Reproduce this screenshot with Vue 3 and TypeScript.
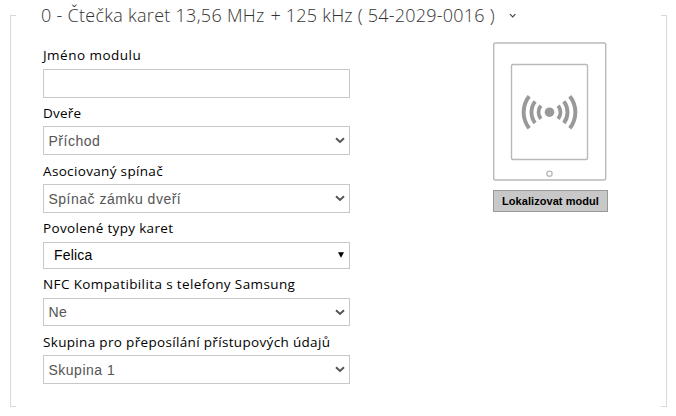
<script setup lang="ts">
import { reactive } from 'vue'

interface Field {
  id: string
  label: string
  kind: 'text' | 'select' | 'multi'
  value: string
  height: number
  spacing: number
}

const fields = reactive<Field[]>([
  { id: 'name', label: 'Jméno modulu', kind: 'text', value: '', height: 29, spacing: 0.48 },
  { id: 'door', label: 'Dveře', kind: 'select', value: 'Příchod', height: 29, spacing: 0.2 },
  { id: 'switch', label: 'Asociovaný spínač', kind: 'select', value: 'Spínač zámku dveří', height: 29, spacing: 0.34 },
  { id: 'cards', label: 'Povolené typy karet', kind: 'multi', value: 'Felica', height: 27, spacing: 0.33 },
  { id: 'nfc', label: 'NFC Kompatibilita s telefony Samsung', kind: 'select', value: 'Ne', height: 28, spacing: 0.38 },
  { id: 'group', label: 'Skupina pro přeposílání přístupových údajů', kind: 'select', value: 'Skupina 1', height: 29, spacing: 0.33 },
])
</script>

<template>
  <main class="page">
    <section class="module">
      <header class="heading">
        <i class="edge"></i>
        <h1 class="title">0 - Čtečka karet 13,56 MHz <span class="frequency">+ 125 kHz ( 54-2029-0016 )</span></h1>
        <svg class="toggle" width="8" height="6" viewBox="0 0 8 6"><path d="M1 1.2 3.7 3.9 6.4 1.2" /></svg>
        <i class="edge edge-end"></i>
      </header>
      <div class="body">
        <form class="fields" @submit.prevent>
          <div v-for="f in fields" :key="f.id" class="field" :class="f.id">
            <label :for="f.id" :style="{ letterSpacing: f.spacing + 'px' }">{{ f.label }}</label>
            <input v-if="f.kind === 'text'" :id="f.id" v-model="f.value" class="control" type="text" />
            <div v-else-if="f.kind === 'select'" class="select" :style="{ height: f.height + 'px' }">
              <select :id="f.id" v-model="f.value" class="control">
                <option>{{ f.value }}</option>
              </select>
              <svg class="chevron" width="10" height="7" viewBox="0 0 10 7"><path d="M1 1.2 5 4.9 9 1.2" /></svg>
            </div>
            <button v-else :id="f.id" type="button" class="control multi">
              <span>{{ f.value }}</span>
              <svg width="6" height="6" viewBox="0 0 6 6"><path d="M0 0.3H6L3 5.8Z" /></svg>
            </button>
          </div>
        </form>
        <aside class="device">
          <svg width="114" height="139" viewBox="0 0 114 139">
            <g class="outline">
              <rect x="0.7" y="1" width="112" height="137" rx="1.5" />
              <rect x="18.5" y="22.5" width="76" height="95" rx="1.5" />
              <circle cx="56.5" cy="131.7" r="2.6" />
            </g>
            <circle class="dot" cx="56.5" cy="70.2" r="4.8" />
            <g class="waves" transform="translate(56.5 70.2)">
              <path d="M-8.7-6.6A11 11 0 0 0-8.7 6.6M-14.4-10.8A18 18 0 0 0-14.4 10.8M-20.3-16A25.8 25.8 0 0 0-20.3 16" />
              <path d="M8.7-6.6A11 11 0 0 1 8.7 6.6M14.4-10.8A18 18 0 0 1 14.4 10.8M20.3-16A25.8 25.8 0 0 1 20.3 16" />
            </g>
          </svg>
          <button type="button" class="locate">Lokalizovat modul</button>
        </aside>
      </div>
      <footer class="bottom"><i class="edge"></i><i class="edge edge-end"></i></footer>
    </section>
  </main>
</template>

<style>
body { background: #fff; }
</style>

<style scoped>
.page { box-sizing: border-box; width: 676px; height: 416px; padding: 0 9px 9px 10px; }
.module { display: flex; flex-direction: column; height: 407px; }
.heading { display: flex; align-items: flex-start; height: 32px; }
.edge { width: 6px; height: 17px; margin-top: 15px; box-sizing: border-box; border-top: 1px solid #d9d9d9; border-left: 1px solid #d9d9d9; }
.edge-end { margin-left: auto; border-left: 0; border-right: 1px solid #d9d9d9; }
.title { width: 456px; margin: 2px 0 0 25px; font: 300 18px/26px "Open Sans", "Noto Sans", sans-serif; letter-spacing: 0.28px; color: #333; white-space: nowrap; }
.frequency { margin-left: 1px; letter-spacing: 0.22px; }
.toggle { margin: 13px 0 0 12px; fill: none; stroke: #444; stroke-width: 1.2; }
.body { flex: 1; display: flex; box-sizing: border-box; border: solid #d9d9d9; border-width: 0 1px; padding: 9px 0 0 32px; }
.fields { width: 307px; }
.field { display: flex; flex-direction: column; }
.field label { height: 29px; font: 13.5px/30px "Open Sans", "Noto Sans", sans-serif; color: #000; white-space: nowrap; }
.name label, .door label { height: 28px; }
.name label { line-height: 28px; }
.switch label, .group label { line-height: 32px; }
.control { box-sizing: border-box; width: 100%; height: 29px; margin: 0; border: 1px solid #c8c8c8; border-radius: 0; background: #fff; outline: 0; padding: 0 4.5px; font: 14px "Liberation Sans", Arial, sans-serif; letter-spacing: 0.5px; color: #555; }
.select { display: grid; }
.select > * { grid-area: 1 / 1; }
.select .control { appearance: none; height: 100%; }
.chevron { place-self: center end; margin-right: 5px; fill: none; stroke: #555; stroke-width: 2; pointer-events: none; }
.multi { display: flex; align-items: center; justify-content: space-between; height: 27px; padding: 0 5px 2px 10px; color: #000; letter-spacing: 0.2px; }
.device { display: flex; flex-direction: column; align-items: flex-start; gap: 9px; margin: 1px 0 0 143px; }
.device svg { display: block; }
.outline { fill: none; stroke: #b9b9b9; stroke-width: 1.4; }
.dot { fill: #999; }
.waves { fill: none; stroke: #999; stroke-width: 3.9; }
.locate { box-sizing: border-box; width: 115px; height: 22px; padding: 0; border: 1px solid #999; background: #c8c8c8; color: #000; font: bold 11px "Liberation Sans", Arial, sans-serif; letter-spacing: 0.06px; white-space: nowrap; }
.bottom { display: flex; height: 17px; }
.bottom .edge { margin-top: 0; border-top: 0; border-bottom: 1px solid #d9d9d9; }
</style>
